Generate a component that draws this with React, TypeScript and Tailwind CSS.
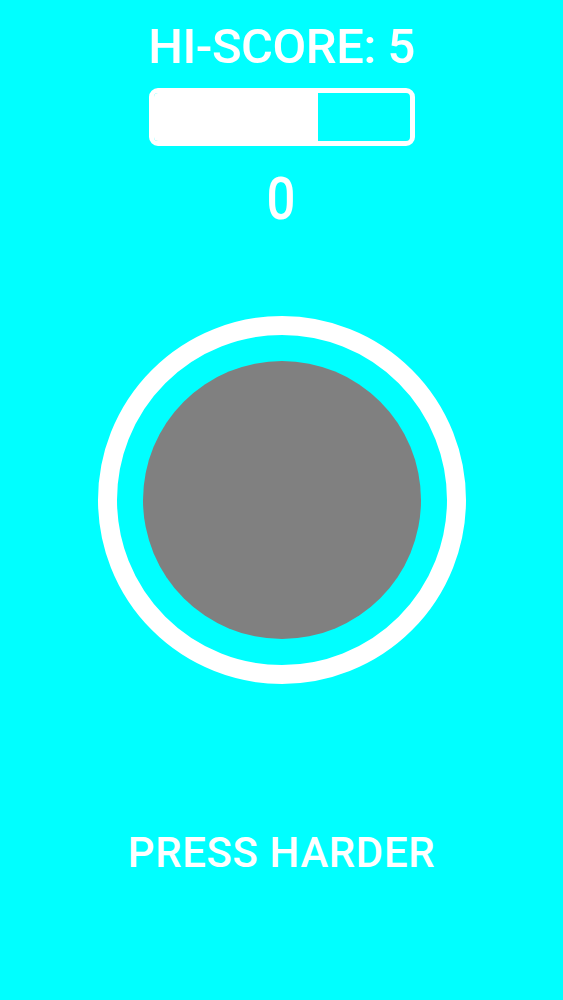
export default function App() {
  const progress = 164; // filled part of the pressure bar, px

  return (
    <div
      className="flex min-h-screen w-full flex-col items-center bg-[#00ffff] text-white"
      style={{ fontFamily: "Roboto, 'Liberation Sans', sans-serif" }}
    >
      <h1 className="mt-[22px] text-[49px] font-medium leading-none tracking-[-0.5px]">HI-SCORE: 5</h1>

      {/* pressure bar */}
      <div className="mt-[17px] flex h-[58px] w-[266px] overflow-hidden rounded-[9px] border-[5px] border-white">
        <div className="h-full bg-white" style={{ width: progress }} />
      </div>

      <div className="mt-[23px] scale-x-[0.85] text-[60px] font-medium leading-none">0</div>

      {/* press button */}
      <div className="mt-[87px] flex h-[368px] w-[368px] items-center justify-center rounded-full border-[19px] border-white">
        <div className="h-[278px] w-[278px] rounded-full bg-[#808080]" />
      </div>

      <p className="mt-[148px] text-[42px] font-medium leading-none tracking-[0.6px]">PRESS HARDER</p>
    </div>
  );
}
